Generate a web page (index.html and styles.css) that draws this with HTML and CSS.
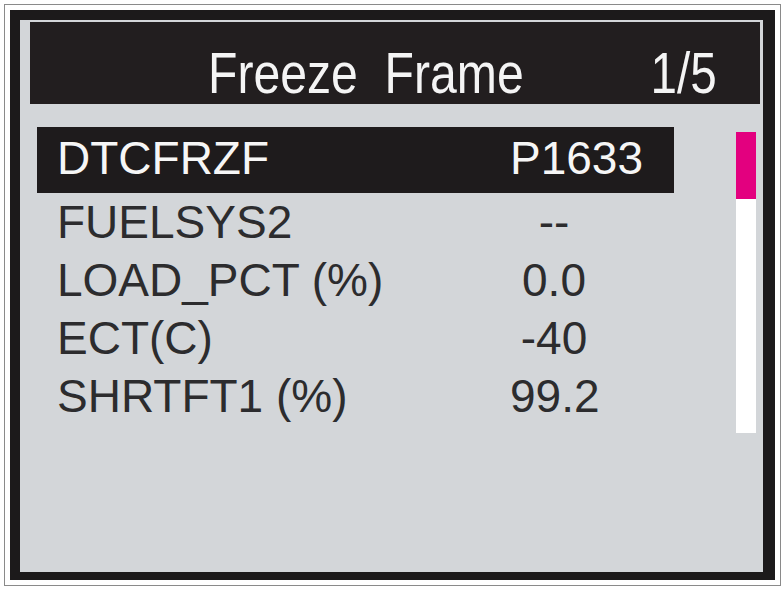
FILE: index.html
```html
<!DOCTYPE html>
<html>
<head>
<meta charset="utf-8">
<link rel="stylesheet" href="styles.css">
</head>
<body>
<div class="page">
  <div class="frame">
    <div class="bezel">
      <div class="screen">
        <div class="titlebar">
          <span class="title">Freeze&nbsp;&nbsp;Frame</span>
          <span class="count">1/5</span>
        </div>
        <div class="content">
          <div class="list">
            <div class="row selected"><span class="label">DTCFRZF</span><span class="value">P1633</span></div>
            <div class="row"><span class="label">FUELSYS2</span><span class="value">--</span></div>
            <div class="row"><span class="label">LOAD_PCT (%)</span><span class="value">0.0</span></div>
            <div class="row"><span class="label">ECT(C)</span><span class="value">-40</span></div>
            <div class="row"><span class="label">SHRTFT1 (%)</span><span class="value">99.2</span></div>
          </div>
          <div class="scrollbar"><div class="thumb"></div></div>
        </div>
      </div>
    </div>
  </div>
</div>
</body>
</html>
```
FILE: styles.css
```css
html, body {
  margin: 0;
  padding: 0;
  background: #ffffff;
}
.page {
  width: 784px;
  height: 590px;
  box-sizing: border-box;
  padding: 4px 3px 4px 4px;
}
.frame {
  height: 582px;
  box-sizing: border-box;
  border: 1px solid #8a8a8a;
  padding: 5px;
}
.bezel {
  height: 100%;
  box-sizing: border-box;
  background: #1c1a1b;
  padding: 10px 12px 8px 10px;
}
.screen {
  height: 100%;
  box-sizing: border-box;
  background: #d3d6d9;
  padding: 2px 3px 0 10px;
  display: flex;
  flex-direction: column;
}
.titlebar {
  height: 82px;
  background: #221e1f;
  color: #f4f4f4;
  display: flex;
  align-items: flex-start;
  justify-content: space-between;
  padding: 0 43px 0 178px;
  font-family: "Liberation Sans", Arial, sans-serif;
  font-size: 58px;
  line-height: 1;
}
.title {
  margin-top: 22px;
  white-space: nowrap;
  transform: scaleX(0.83);
  transform-origin: left center;
}
.count {
  margin-top: 22px;
  white-space: nowrap;
  transform: scaleX(0.82);
  transform-origin: right center;
}
.content {
  display: flex;
  align-items: flex-start;
  padding-left: 7px;
}
.list {
  width: 637px;
  margin-top: 23px;
  font-family: "Liberation Sans", Arial, sans-serif;
  font-size: 46px;
  color: #2c2c2e;
}
.row {
  display: flex;
  height: 58px;
  line-height: 58px;
  padding-left: 20px;
}
.row.selected {
  height: 66px;
  line-height: 62px;
  background: #1e1b1c;
  color: #f6f6f6;
}
.label {
  width: 453px;
  flex: none;
  white-space: pre;
}
.value {
  width: 88px;
  flex: none;
  text-align: center;
  white-space: nowrap;
}
.selected .value {
  text-align: left;
}
.scrollbar {
  width: 20px;
  height: 301px;
  margin-top: 28px;
  margin-left: 62px;
  background: #ffffff;
}
.thumb {
  height: 67px;
  background: #e3007f;
}
```
